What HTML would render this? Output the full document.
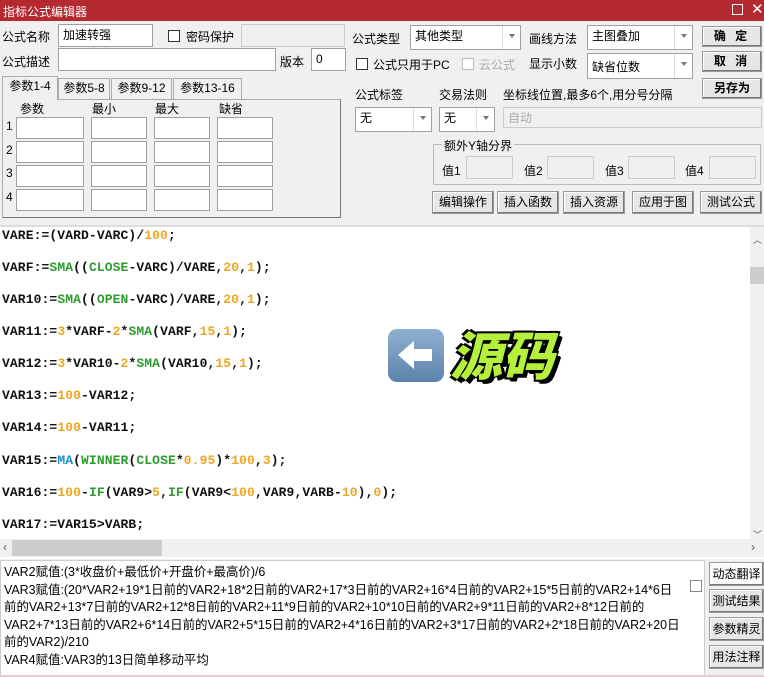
<!DOCTYPE html>
<html><head><meta charset="utf-8"><style>
*{box-sizing:border-box;margin:0;padding:0}
body{width:764px;height:677px;overflow:hidden;background:#f0f0f0;font-family:"Liberation Sans","Noto Sans CJK SC",sans-serif;font-size:12px;color:#000;position:relative}
.a{position:absolute;white-space:nowrap}
.in{position:absolute;background:#fff;border:1px solid #a0a0a0;padding:2px 4px;font-size:12px;line-height:16px}
.dis{background:#f0f0f0;border-color:#ccc;color:#aaa}
.btn{position:absolute;background:#e6e6e6;border:1px solid #999;box-shadow:inset -1px -1px 0 #777,inset 1px 1px 0 #fff;text-align:center;font-size:12px;line-height:19px}
.cb{position:absolute;width:12px;height:12px;border:1px solid #333;background:#fff}
.dd{position:absolute;right:0;top:0;bottom:0;width:18px;border-left:1px solid #ddd}
.dd:after{content:"";position:absolute;left:6px;top:8px;border:3px solid transparent;border-top:4px solid #777}
.code{position:absolute;left:2px;font-family:"Liberation Mono",monospace;font-weight:bold;font-size:13px;letter-spacing:0.1px;color:#111}
.g{color:#2d9b2d}.o{color:#efa51f}.b{color:#1b8fc8}
.tab{position:absolute;top:78px;height:21px;border:1px solid #aaa;border-bottom:none;background:#f0f0f0;line-height:19px;text-align:center;font-size:12px}
</style></head><body>
<div class="a" style="left:0;top:0;width:764px;height:21px;background:#b52a31"></div>
<div class="a" style="left:3px;top:3px;color:#fff;font-size:12px">指标公式编辑器</div>
<div class="a" style="left:732px;top:4px;width:11px;height:11px;border:1px solid #fff"></div>
<div class="a" style="left:751px;top:0;color:#fff;font-size:15px">✕</div>

<div class="a" style="left:2px;top:28px">公式名称</div>
<div class="in" style="left:58px;top:24px;width:95px;height:23px">加速转强</div>
<div class="cb" style="left:168px;top:30px"></div>
<div class="a" style="left:186px;top:28px">密码保护</div>
<div class="in dis" style="left:241px;top:24px;width:104px;height:23px"></div>
<div class="a" style="left:2px;top:53px">公式描述</div>
<div class="in" style="left:58px;top:48px;width:218px;height:23px"></div>
<div class="a" style="left:280px;top:53px;color:#000">版本</div>
<div class="in" style="left:311px;top:48px;width:35px;height:23px">0</div>

<div class="tab" style="left:2px;width:56px;top:76px;height:24px;z-index:2">参数1-4</div>
<div class="tab" style="left:58px;width:52px">参数5-8</div>
<div class="tab" style="left:111px;width:61px">参数9-12</div>
<div class="tab" style="left:173px;width:69px">参数13-16</div>
<div class="a" style="left:2px;top:99px;width:339px;height:119px;border:1px solid #aaa;border-right-color:#777;border-bottom-color:#777"></div>
<div class="a" style="left:20px;top:100px">参数</div>
<div class="a" style="left:92px;top:100px">最小</div>
<div class="a" style="left:155px;top:100px">最大</div>
<div class="a" style="left:219px;top:100px">缺省</div>
<div class="a" style="left:6px;top:119px">1</div><div class="a" style="left:6px;top:143px">2</div><div class="a" style="left:6px;top:166px">3</div><div class="a" style="left:6px;top:190px">4</div>

<div class="a" style="left:352px;top:30px">公式类型</div>
<div class="in" style="left:410px;top:25px;width:111px;height:25px">其他类型<div class="dd"></div></div>
<div class="a" style="left:529px;top:30px">画线方法</div>
<div class="in" style="left:587px;top:25px;width:106px;height:25px">主图叠加<div class="dd"></div></div>
<div class="btn" style="left:702px;top:26px;width:60px;height:21px;font-weight:bold;letter-spacing:3px">确 定</div>
<div class="cb" style="left:356px;top:58px"></div>
<div class="a" style="left:373px;top:56px">公式只用于PC</div>
<div class="cb" style="left:462px;top:58px;border-color:#bbb"></div>
<div class="a" style="left:479px;top:56px;color:#aaa">云公式</div>
<div class="a" style="left:529px;top:55px">显示小数</div>
<div class="in" style="left:587px;top:53px;width:106px;height:26px;padding-top:5px">缺省位数<div class="dd"></div></div>
<div class="btn" style="left:702px;top:51px;width:60px;height:21px;font-weight:bold;letter-spacing:3px">取 消</div>
<div class="btn" style="left:702px;top:78px;width:60px;height:21px;font-weight:bold">另存为</div>
<div class="a" style="left:355px;top:86px">公式标签</div>
<div class="a" style="left:439px;top:86px">交易法则</div>
<div class="a" style="left:503px;top:86px">坐标线位置,最多6个,用分号分隔</div>
<div class="in" style="left:355px;top:107px;width:77px;height:25px">无<div class="dd"></div></div>
<div class="in" style="left:439px;top:107px;width:56px;height:25px">无<div class="dd"></div></div>
<div class="in dis" style="left:503px;top:107px;width:259px;height:21px;color:#aaa">自动</div>
<div class="a" style="left:433px;top:144px;width:328px;height:41px;border:1px solid #bbb"></div>
<div class="a" style="left:442px;top:137px;background:#f0f0f0;padding:0 2px">额外Y轴分界</div>
<div class="a" style="left:442px;top:162px">值1</div><div class="in dis" style="left:466px;top:156px;width:47px;height:23px"></div>
<div class="a" style="left:524px;top:162px">值2</div><div class="in dis" style="left:547px;top:156px;width:47px;height:23px"></div>
<div class="a" style="left:605px;top:162px">值3</div><div class="in dis" style="left:628px;top:156px;width:47px;height:23px"></div>
<div class="a" style="left:685px;top:162px">值4</div><div class="in dis" style="left:709px;top:156px;width:47px;height:23px"></div>
<div class="btn" style="left:432px;top:191px;width:62px;height:23px;line-height:21px">编辑操作</div>
<div class="btn" style="left:497px;top:191px;width:62px;height:23px;line-height:21px">插入函数</div>
<div class="btn" style="left:563px;top:191px;width:62px;height:23px;line-height:21px">插入资源</div>
<div class="btn" style="left:632px;top:191px;width:62px;height:23px;line-height:21px">应用于图</div>
<div class="btn" style="left:700px;top:191px;width:62px;height:23px;line-height:21px">测试公式</div>

<div class="a" style="left:0;top:225px;width:764px;height:334px;background:#fff;border-top:2px solid #ddd"></div>
<div class="a" style="left:750px;top:227px;width:14px;height:313px;background:#f0f0f0"></div>
<div class="a" style="left:753px;top:233px;font-size:9px;color:#555">︿</div>
<div class="a" style="left:750px;top:267px;width:14px;height:17px;background:#cdcdcd"></div>
<div class="a" style="left:753px;top:528px;font-size:9px;color:#555">﹀</div>
<div class="a" style="left:0;top:539px;width:764px;height:18px;background:#f0f0f0"></div>
<div class="a" style="left:12px;top:540px;width:150px;height:16px;background:#cdcdcd"></div>
<div class="a" style="left:3px;top:540px;color:#555">‹</div>
<div class="a" style="left:751px;top:540px;color:#555">›</div>

<div class="code" style="top:228px">VARE:=(VARD-VARC)/<span class="o">100</span>;</div>
<div class="code" style="top:260px">VARF:=<span class="g">SMA</span>((<span class="g">CLOSE</span>-VARC)/VARE,<span class="o">20</span>,<span class="o">1</span>);</div>
<div class="code" style="top:292px">VAR10:=<span class="g">SMA</span>((<span class="g">OPEN</span>-VARC)/VARE,<span class="o">20</span>,<span class="o">1</span>);</div>
<div class="code" style="top:324px">VAR11:=<span class="o">3</span>*VARF-<span class="o">2</span>*<span class="g">SMA</span>(VARF,<span class="o">15</span>,<span class="o">1</span>);</div>
<div class="code" style="top:356px">VAR12:=<span class="o">3</span>*VAR10-<span class="o">2</span>*<span class="g">SMA</span>(VAR10,<span class="o">15</span>,<span class="o">1</span>);</div>
<div class="code" style="top:388px">VAR13:=<span class="o">100</span>-VAR12;</div>
<div class="code" style="top:420px">VAR14:=<span class="o">100</span>-VAR11;</div>
<div class="code" style="top:453px">VAR15:=<span class="b">MA</span>(<span class="g">WINNER</span>(<span class="g">CLOSE</span>*<span class="o">0.95</span>)*<span class="o">100</span>,<span class="o">3</span>);</div>
<div class="code" style="top:485px">VAR16:=<span class="o">100</span>-<span class="g">IF</span>(VAR9&gt;<span class="o">5</span>,<span class="g">IF</span>(VAR9&lt;<span class="o">100</span>,VAR9,VARB-<span class="o">10</span>),<span class="o">0</span>);</div>
<div class="code" style="top:517px">VAR17:=VAR15&gt;VARB;</div>

<div class="a" style="left:388px;top:329px;width:56px;height:53px;border-radius:9px;background:linear-gradient(#8fb0d0,#5c82aa)"></div>
<svg class="a" style="left:394px;top:337px" width="44" height="36" viewBox="0 0 44 36"><path d="M4 18 L20 4 L20 12 L38 12 L38 24 L20 24 L20 32 Z" fill="#fff"/></svg>
<div class="a" style="left:450px;top:318px;font-size:52px;font-weight:900;font-style:italic;color:#b4f03c;font-family:'Noto Sans CJK SC',sans-serif;line-height:70px;text-shadow:3px 3px 0 #000,-2px -2px 0 #000,2px -2px 0 #000,-2px 2px 0 #000,4px 4px 0 #000">源码</div>

<div class="a" style="left:0;top:560px;width:705px;height:117px;background:#fff;border:1px solid #ccc"></div>
<div class="cb" style="left:690px;top:580px;border-color:#888"></div>
<div class="a" style="left:4px;top:564px;font-size:12.45px;line-height:17.6px;white-space:normal;width:700px">VAR2赋值:(3*收盘价+最低价+开盘价+最高价)/6<br>VAR3赋值:(20*VAR2+19*1日前的VAR2+18*2日前的VAR2+17*3日前的VAR2+16*4日前的VAR2+15*5日前的VAR2+14*6日<br>前的VAR2+13*7日前的VAR2+12*8日前的VAR2+11*9日前的VAR2+10*10日前的VAR2+9*11日前的VAR2+8*12日前的<br>VAR2+7*13日前的VAR2+6*14日前的VAR2+5*15日前的VAR2+4*16日前的VAR2+3*17日前的VAR2+2*18日前的VAR2+20日<br>前的VAR2)/210<br>VAR4赋值:VAR3的13日简单移动平均</div>
<div class="btn" style="left:709px;top:562px;width:55px;height:24px;line-height:22px;background:#fafafa">动态翻译</div>
<div class="btn" style="left:709px;top:589px;width:55px;height:24px;line-height:22px">测试结果</div>
<div class="btn" style="left:709px;top:617px;width:55px;height:24px;line-height:22px">参数精灵</div>
<div class="btn" style="left:709px;top:645px;width:55px;height:24px;line-height:22px">用法注释</div>
<div class="a" style="left:0;top:675px;width:764px;height:2px;background:#e8c8c8"></div>

<div class="in" style="left:16px;top:117px;width:68px;height:22px"></div><div class="in" style="left:91px;top:117px;width:56px;height:22px"></div><div class="in" style="left:154px;top:117px;width:56px;height:22px"></div><div class="in" style="left:217px;top:117px;width:56px;height:22px"></div>
<div class="in" style="left:16px;top:141px;width:68px;height:22px"></div><div class="in" style="left:91px;top:141px;width:56px;height:22px"></div><div class="in" style="left:154px;top:141px;width:56px;height:22px"></div><div class="in" style="left:217px;top:141px;width:56px;height:22px"></div>
<div class="in" style="left:16px;top:165px;width:68px;height:22px"></div><div class="in" style="left:91px;top:165px;width:56px;height:22px"></div><div class="in" style="left:154px;top:165px;width:56px;height:22px"></div><div class="in" style="left:217px;top:165px;width:56px;height:22px"></div>
<div class="in" style="left:16px;top:189px;width:68px;height:22px"></div><div class="in" style="left:91px;top:189px;width:56px;height:22px"></div><div class="in" style="left:154px;top:189px;width:56px;height:22px"></div><div class="in" style="left:217px;top:189px;width:56px;height:22px"></div>
</body></html>
